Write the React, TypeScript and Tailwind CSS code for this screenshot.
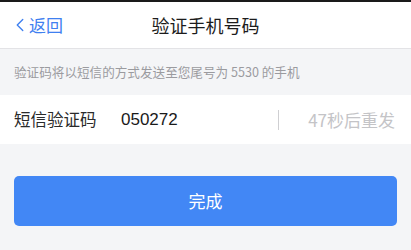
import { ChevronLeft } from "lucide-react"

export default function App() {
  return (
    <div className="w-[411px] h-[250px] bg-[#f4f5f7] border-t-2 border-[#1a1a1a] font-['Noto_Sans_CJK_SC',sans-serif] overflow-hidden">
      {/* Header */}
      <div className="relative flex items-center justify-center h-[47px] bg-white border-b border-[#e3e3e6]">
        <button className="absolute left-[9px] top-0 h-full flex items-center text-[#3f80f0] text-[17px]">
          <ChevronLeft className="w-[22px] h-[28px] -mr-[2px]" strokeWidth={1.5} />
          返回
        </button>
        <h1 className="text-[18px] text-[#1c1c1c]">验证手机号码</h1>
      </div>

      {/* Hint */}
      <div className="h-[46px] flex items-center px-[14px] text-[12.6px] text-[#9b9b9f]">
        验证码将以短信的方式发送至您尾号为 5530 的手机
      </div>

      {/* Code row */}
      <div className="h-[49px] bg-white flex items-center pl-[14px] pr-[16px]">
        <span className="w-[107px] text-[16.5px] text-[#2a2a2a]">短信验证码</span>
        <span className="flex-1 text-[17px] text-[#1a1a1a] font-['Liberation_Sans',sans-serif]">050272</span>
        <span className="w-px h-[20px] bg-[#cfcfd2] mr-[29px]" />
        <span className="text-[17px] text-[#c4c4c7]">47秒后重发</span>
      </div>

      {/* Submit */}
      <div className="px-[14px] pt-[32px]">
        <button className="w-full h-[50px] rounded-[5px] bg-[#4287f5] text-white text-[17px]">
          完成
        </button>
      </div>
    </div>
  )
}
